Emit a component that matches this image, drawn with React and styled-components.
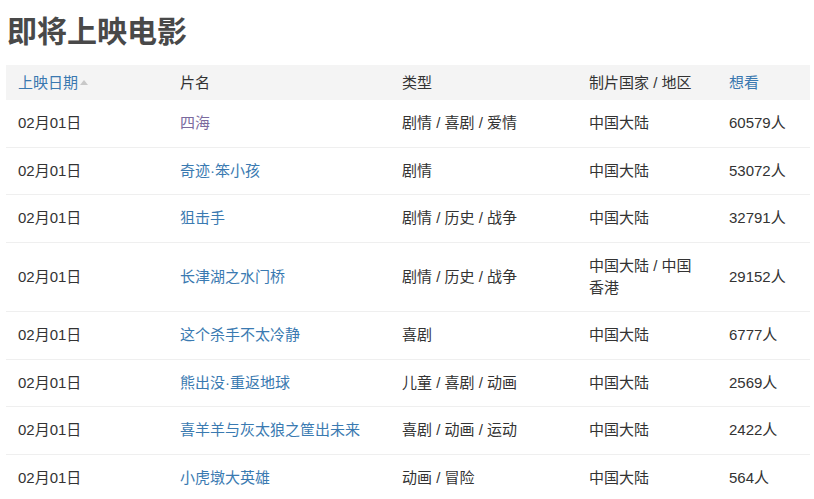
import React from "react";
import styled, { createGlobalStyle } from "styled-components";

const Global = createGlobalStyle`
  html, body { margin: 0; padding: 0; background: #fff; }
  body {
    font-family: "Liberation Sans", "Noto Sans CJK SC", sans-serif;
    color: #333;
  }
`;

const Page = styled.div`
  padding: 0 4px 0 6px;
`;

const Title = styled.h1`
  margin: 0;
  padding: 9px 0 0 1px;
  height: 65px;
  box-sizing: border-box;
  font-size: 30px;
  line-height: 40px;
  font-weight: bold;
  color: #494949;
  font-family: "Noto Sans CJK SC", sans-serif;
`;

const Table = styled.table`
  width: 804px;
  border-collapse: collapse;
  table-layout: fixed;
  font-size: 15px;
`;

const Col = styled.col`
  width: ${(p) => p.$w}px;
`;

const Th = styled.th`
  background: #f4f4f4;
  height: 35px;
  box-sizing: border-box;
  padding: 0 12px;
  text-align: left;
  font-weight: normal;
  line-height: 22px;
  color: ${(p) => (p.$link ? "#3a78b0" : "#333")};
`;

const Arrow = styled.span`
  display: inline-block;
  width: 0;
  height: 0;
  margin-left: 2px;
  vertical-align: 3px;
  border-left: 4px solid transparent;
  border-right: 4px solid transparent;
  border-bottom: 5px solid #c8c8c8;
`;

const Tr = styled.tr`
  border-top: 1px solid #efefef;
  &:first-child { border-top: none; }
`;

const Td = styled.td`
  padding: 12px 12px 12.5px;
  line-height: 22px;
  vertical-align: middle;
  color: #333;
`;

const Link = styled.a`
  color: ${(p) => (p.$visited ? "#7a6a9e" : "#3a7ab1")};
  text-decoration: none;
`;

const rows = [
  ["02月01日", "四海", "剧情 / 喜剧 / 爱情", "中国大陆", "60579人", true],
  ["02月01日", "奇迹·笨小孩", "剧情", "中国大陆", "53072人"],
  ["02月01日", "狙击手", "剧情 / 历史 / 战争", "中国大陆", "32791人"],
  ["02月01日", "长津湖之水门桥", "剧情 / 历史 / 战争", "中国大陆 / 中国香港", "29152人"],
  ["02月01日", "这个杀手不太冷静", "喜剧", "中国大陆", "6777人"],
  ["02月01日", "熊出没·重返地球", "儿童 / 喜剧 / 动画", "中国大陆", "2569人"],
  ["02月01日", "喜羊羊与灰太狼之筐出未来", "喜剧 / 动画 / 运动", "中国大陆", "2422人"],
  ["02月01日", "小虎墩大英雄", "动画 / 冒险", "中国大陆", "564人"],
];

export default function App() {
  return (
    <>
      <Global />
      <Page>
        <Title>即将上映电影</Title>
        <Table>
          <colgroup>
            <Col $w={162} />
            <Col $w={222} />
            <Col $w={187} />
            <Col $w={140} />
            <Col $w={93} />
          </colgroup>
          <thead>
            <tr>
              <Th $link>上映日期<Arrow /></Th>
              <Th>片名</Th>
              <Th>类型</Th>
              <Th>制片国家 / 地区</Th>
              <Th $link>想看</Th>
            </tr>
          </thead>
          <tbody>
            {rows.map((r, i) => (
              <Tr key={i}>
                <Td>{r[0]}</Td>
                <Td><Link href="#" $visited={r[5]}>{r[1]}</Link></Td>
                <Td>{r[2]}</Td>
                <Td>{r[3]}</Td>
                <Td>{r[4]}</Td>
              </Tr>
            ))}
          </tbody>
        </Table>
      </Page>
    </>
  );
}
